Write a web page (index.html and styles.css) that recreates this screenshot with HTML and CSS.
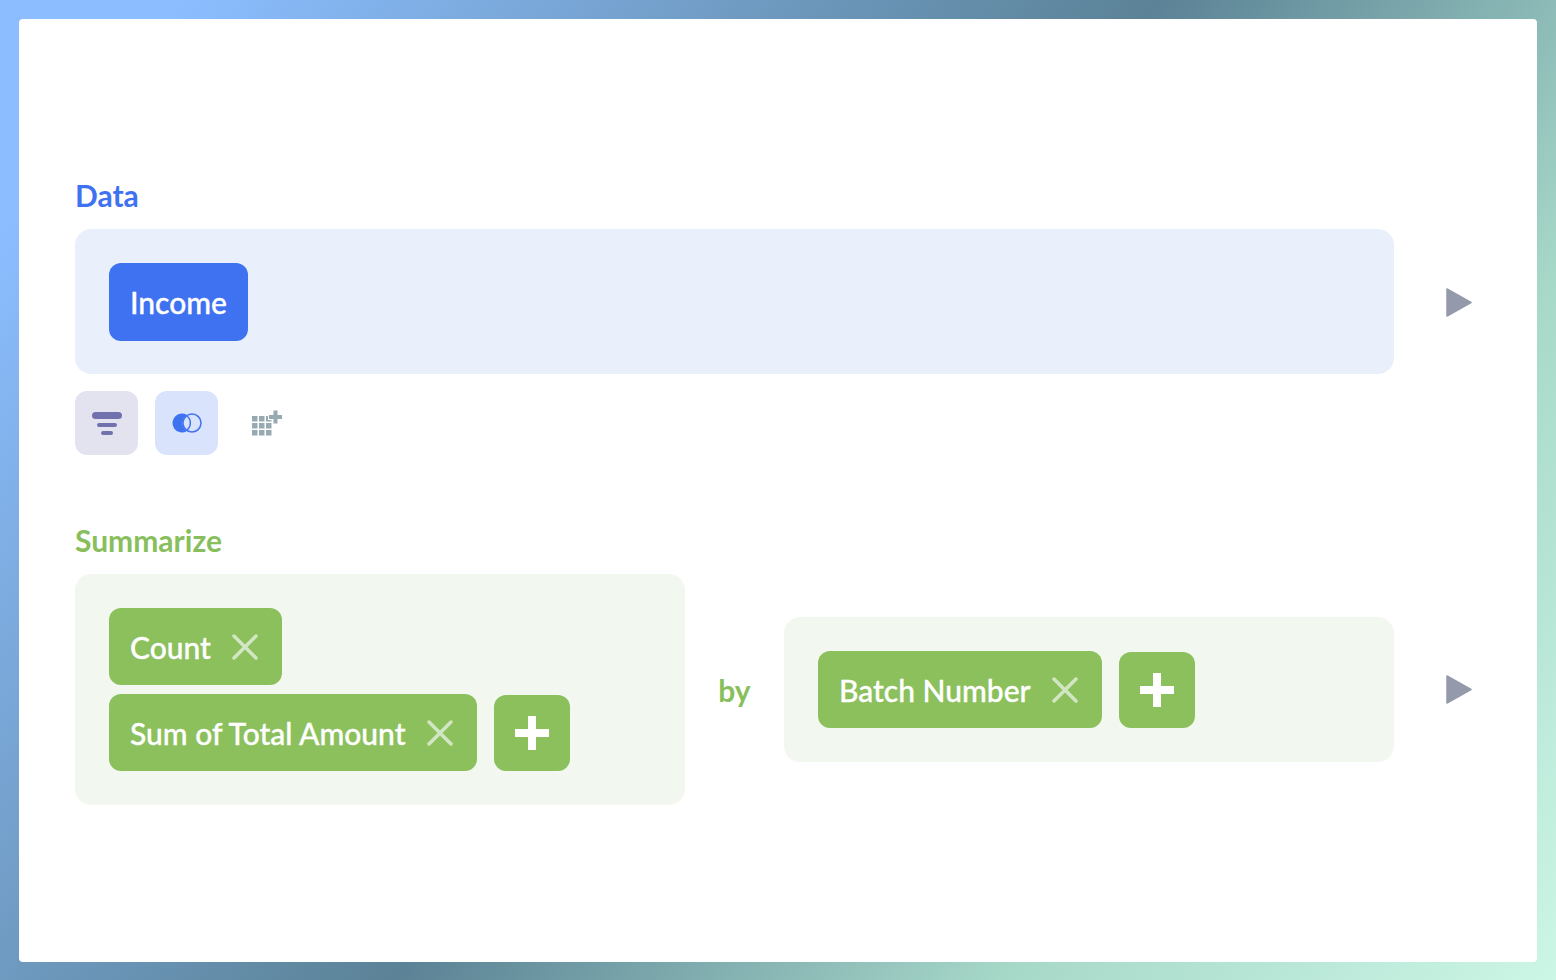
FILE: index.html
```html
<!DOCTYPE html>
<html>
  <head>
    <meta charset="UTF-8" />
    <title>Notebook</title>
    <link rel="stylesheet" href="styles.css">
  </head>
  <body>
    <div class="card">
      <div class="step-label data-label">Data</div>
      <div class="step-row">
        <div class="panel data-panel">
          <div class="token token-blue">Income</div>
        </div>
        <div class="play-col data-play">
          <svg class="play" viewBox="0 0 26 29"><path d="M1 1 L25 14.5 L1 28 Z" fill="#949aab" stroke="#949aab" stroke-width="1.5" stroke-linejoin="round"/></svg>
        </div>
      </div>

      <div class="tools">
        <div class="tool tool-filter">
          <svg width="30" height="23" viewBox="0 0 30 23">
            <rect x="0" y="0" width="30" height="7" rx="3.5" fill="#7172ad"/>
            <rect x="5" y="11" width="20" height="4" rx="2" fill="#7172ad"/>
            <rect x="9" y="19" width="12" height="4" rx="2" fill="#7172ad"/>
          </svg>
        </div>
        <div class="tool tool-join">
          <svg width="30" height="20" viewBox="0 0 30 20">
            <path d="M10 0.5 a9.5 9.5 0 0 1 5 1.4 a9.5 9.5 0 0 0 0 16.2 a9.5 9.5 0 1 1 -5 -17.6 Z" fill="#3f72f1"/>
            <circle cx="20" cy="10" r="9" fill="none" stroke="#3f72f1" stroke-width="1.5"/>
            <path d="M15 3 a9 9 0 0 1 0 14" fill="none" stroke="#3f72f1" stroke-width="1.5"/>
          </svg>
        </div>
        <div class="tool">
          <svg width="30" height="26" viewBox="0 0 30 26" fill="#97a9b1">
            <rect x="0" y="6" width="5.5" height="5.5"/>
            <rect x="7" y="6" width="5.5" height="5.5"/>
            <rect x="14" y="6" width="5.5" height="5.5"/>
            <rect x="0" y="13" width="5.5" height="5.5"/>
            <rect x="7" y="13" width="5.5" height="5.5"/>
            <rect x="14" y="13" width="5.5" height="5.5"/>
            <rect x="0" y="20" width="5.5" height="5.5"/>
            <rect x="7" y="20" width="5.5" height="5.5"/>
            <rect x="14" y="20" width="5.5" height="5.5"/>
            <path d="M21.5 0.5 h4 v4.5 h4.5 v4 h-4.5 v4.5 h-4 v-4.5 h-4.5 v-4 h4.5 Z" stroke="#fff" stroke-width="2" paint-order="stroke"/>
          </svg>
        </div>
      </div>

      <div class="step-label summarize-label">Summarize</div>
      <div class="step-row">
        <div class="panel sum-panel">
          <div class="token-line">
            <div class="token token-green">Count
              <svg class="close" viewBox="0 0 26 26"><path d="M2 2 L24 24 M24 2 L2 24"/></svg>
            </div>
          </div>
          <div class="token-line">
            <div class="token token-green">Sum of Total Amount
              <svg class="close" viewBox="0 0 26 26"><path d="M2 2 L24 24 M24 2 L2 24"/></svg>
            </div>
            <div class="add">
              <svg width="34" height="34" viewBox="0 0 34 34"><path d="M13 0 h8 v13 h13 v8 h-13 v13 h-8 v-13 h-13 v-8 h13 Z" fill="#fff"/></svg>
            </div>
          </div>
        </div>
        <div class="by">by</div>
        <div class="panel group-panel">
          <div class="token-line">
            <div class="token token-green">Batch Number
              <svg class="close" viewBox="0 0 26 26"><path d="M2 2 L24 24 M24 2 L2 24"/></svg>
            </div>
            <div class="add">
              <svg width="34" height="34" viewBox="0 0 34 34"><path d="M13 0 h8 v13 h13 v8 h-13 v13 h-8 v-13 h-13 v-8 h13 Z" fill="#fff"/></svg>
            </div>
          </div>
        </div>
        <div class="play-col">
          <svg class="play" viewBox="0 0 26 29"><path d="M1 1 L25 14.5 L1 28 Z" fill="#949aab" stroke="#949aab" stroke-width="1.5" stroke-linejoin="round"/></svg>
        </div>
      </div>
    </div>
  </body>
</html>
```

FILE: styles.css
```css
* {
  box-sizing: border-box;
  font-family: Lato, "Open Sans", sans-serif;
}

html,
body {
  height: 980px;
  margin: 0;
  overflow: hidden;
}

body {
  padding: 19px 19px 18px 19px;
  background: linear-gradient(128deg, #8bbdff 0%, #8bbdff 8%, #5b8296 50%, #a6d8c8 76%, #ccf6e6 100%);
}

.card {
  height: 943px;
  background: #fff;
  border-radius: 4px;
  padding: 158px 0 0 56px;
}

.step-label {
  font-size: 30px;
  font-weight: 700;
  line-height: 36px;
  margin-bottom: 16px;
}

.data-label {
  color: #3f72f1;
}

.summarize-label {
  color: #88bf5c;
  margin-top: 67px;
}

.step-row {
  display: flex;
  align-items: center;
}

.panel {
  border-radius: 16px;
  padding: 34px 33.5px;
}

.data-panel {
  width: 1319px;
  padding-bottom: 33px;
  background: #e9effb;
}

.sum-panel,
.group-panel {
  width: 610px;
  background: #f2f8ef;
}

.token-line {
  display: flex;
  align-items: center;
  gap: 17px;
}

.token-line + .token-line {
  margin-top: 9px;
}

.token {
  display: inline-flex;
  align-items: center;
  height: 77px;
  padding: 0 24px 0 21.5px;
  border-radius: 12px;
  color: #fff;
  font-size: 30px;
  font-weight: 500;
  -webkit-text-stroke: 0.35px #fff;
  white-space: nowrap;
}

.token-blue {
  height: 78px;
  background: #3f72f1;
  padding-right: 21.5px;
}

.token-green {
  background: #8bc05c;
}

.close {
  width: 26px;
  height: 26px;
  margin-left: 21px;
}

.close path {
  fill: none;
  stroke: #d3e6c4;
  stroke-width: 3.5;
  stroke-linecap: round;
}

.add {
  width: 76px;
  height: 76px;
  border-radius: 12px;
  background: #8bc05c;
  display: flex;
  align-items: center;
  justify-content: center;
}

.by {
  width: 99px;
  text-align: center;
  color: #88bf5c;
  font-size: 30px;
  font-weight: 700;
}

.play-col {
  width: 143px;
  padding-left: 52px;
  display: flex;
}

.data-play {
  padding-top: 2px;
}

.play {
  width: 26px;
  height: 29px;
}

.tools {
  display: flex;
  gap: 17px;
  margin-top: 17px;
}

.tool {
  width: 63px;
  height: 64px;
  border-radius: 12px;
  display: flex;
  align-items: center;
  justify-content: center;
}

.tool-filter {
  background: #e3e3f0;
}

.tool-join {
  background: #d9e3fc;
}
```
